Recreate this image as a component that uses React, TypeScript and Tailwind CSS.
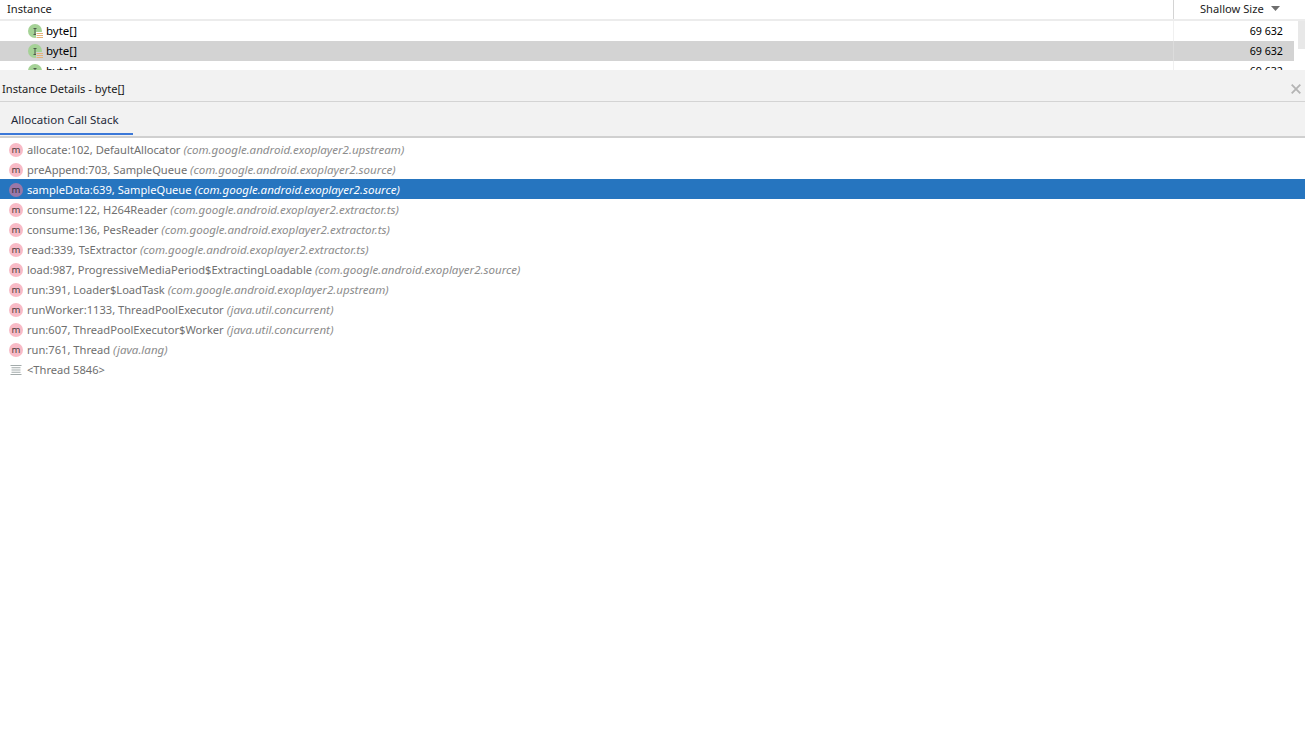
const frames: [string, string][] = [
  ['allocate:102, DefaultAllocator', 'com.google.android.exoplayer2.upstream'],
  ['preAppend:703, SampleQueue', 'com.google.android.exoplayer2.source'],
  ['sampleData:639, SampleQueue', 'com.google.android.exoplayer2.source'],
  ['consume:122, H264Reader', 'com.google.android.exoplayer2.extractor.ts'],
  ['consume:136, PesReader', 'com.google.android.exoplayer2.extractor.ts'],
  ['read:339, TsExtractor', 'com.google.android.exoplayer2.extractor.ts'],
  ['load:987, ProgressiveMediaPeriod$ExtractingLoadable', 'com.google.android.exoplayer2.source'],
  ['run:391, Loader$LoadTask', 'com.google.android.exoplayer2.upstream'],
  ['runWorker:1133, ThreadPoolExecutor', 'java.util.concurrent'],
  ['run:607, ThreadPoolExecutor$Worker', 'java.util.concurrent'],
  ['run:761, Thread', 'java.lang'],
];

const InstanceIcon = ({ selected }: { selected?: boolean }) => (
  <svg width="16" height="15" viewBox="0 0 16 15" className="shrink-0">
    <circle cx="7" cy="7" r="7" fill="#a5d296" />
    <path d="M5.500 4.500h3M7 4.500v6M5.500 10.500h3" stroke="#4d5a4a" strokeWidth="1" fill="none" />
    <rect x="8" y="8" width="8" height="7" fill={selected ? '#d3d3d3' : '#ffffff'} />
    <path d="M8.500 9.500h6.500M8.500 11.500h6.500M8.500 13.500h6.500" stroke="#e3b27a" strokeWidth="1" fill="none" />
  </svg>
);

const MethodIcon = ({ selected }: { selected: boolean }) => (
  <div
    className={`w-[14px] h-[14px] rounded-full shrink-0 flex items-center justify-center text-[9.500px] leading-none pb-[1px] ${
      selected ? 'bg-[#9a78a8] text-[#2c2c3a]' : 'bg-[#f8bac6] text-[#4a3a3c]'
    }`}
  >
    m
  </div>
);

const ThreadIcon = () => (
  <svg width="12" height="12" viewBox="0 0 12 12" className="shrink-0">
    <path d="M0.500 1.500h11M1.500 3.750h9M1.500 6h9M1.500 8.250h9M0.500 10.500h11" stroke="#a3abab" strokeWidth="1.200" fill="none" />
  </svg>
);

const InstanceRow = ({ selected }: { selected?: boolean }) => (
  <div className={`flex h-5 mr-[11px] ${selected ? 'bg-[#d3d3d3]' : 'bg-white'}`}>
    <div className="flex-1 flex items-center pl-[28px] gap-[2px] text-black text-[11.500px]">
      <InstanceIcon selected={selected} />
      <span>byte[]</span>
    </div>
    <div className={`w-[121px] border-l flex items-center justify-end pr-[11px] text-black text-[10.700px] ${selected ? 'border-[#dcdcdc]' : 'border-[#f0f0f0]'}`}>
      69 632
    </div>
  </div>
);

export default function App() {
  return (
    <div className="w-[1305px] h-[735px] bg-white overflow-hidden text-[11.150px] font-['Noto_Sans',sans-serif]">
      <div className="h-[70px] overflow-hidden relative">
        <div className="flex h-[21px] border-b-2 border-[#ececec] text-[#1c1c1c]">
          <div className="flex-1 pl-[7px] leading-[17px]">Instance</div>
          <div className="w-[132px] border-l border-[#d4d4d4] flex items-start pl-[26px] leading-[17px] gap-[7px]">
            <span>Shallow Size</span>
            <svg width="9" height="5" viewBox="0 0 9 5" className="mt-[6px]">
              <path d="M0 0h9L4.500 5z" fill="#6e6e6e" />
            </svg>
          </div>
        </div>
        <InstanceRow />
        <InstanceRow selected />
        <InstanceRow />
        <div className="absolute right-0 top-[21px] w-[7px] h-[28px] bg-[#e8e8e8]" />
      </div>

      <div className="h-[32px] bg-[#f2f2f2] border-b border-[#d4d4d4] flex items-center justify-between pt-[7px] pl-[2px] pr-[4px] text-[#1c1c1c]">
        <span>Instance Details - byte[]</span>
        <svg width="10" height="10" viewBox="0 0 10 10">
          <path d="M0.700 0.700l8.600 8.600M9.300 0.700l-8.600 8.600" stroke="#b4b4b4" strokeWidth="1.800" fill="none" />
        </svg>
      </div>

      <div className="h-[36px] bg-[#f2f2f2] border-b-2 border-[#d0d0d0] flex items-start">
        <div className="w-[133px] h-[33px] border-b-2 border-[#3b78d8] pl-[11px] pt-[9px] leading-[17px] text-[11.500px] text-[#1f2a3a]">
          Allocation Call Stack
        </div>
      </div>

      <div className="pt-[1px]">
        {frames.map(([method, pkg], i) => {
          const selected = i === 2;
          return (
            <div
              key={method}
              className={`flex items-center h-5 pt-[2px] pl-[9px] gap-[4px] whitespace-nowrap ${
                selected ? 'bg-[#2675bf] text-white' : 'text-[#6f6f6f]'
              }`}
            >
              <MethodIcon selected={selected} />
              <span>
                {method}{' '}
                <i className={`text-[11.550px] ${selected ? 'text-white' : 'text-[#8c8c8c]'}`}>({pkg})</i>
              </span>
            </div>
          );
        })}
        <div className="flex items-center h-5 pt-[2px] pl-[10px] gap-[5px] text-[#6f6f6f]">
          <ThreadIcon />
          <span>&lt;Thread 5846&gt;</span>
        </div>
      </div>
    </div>
  );
}
